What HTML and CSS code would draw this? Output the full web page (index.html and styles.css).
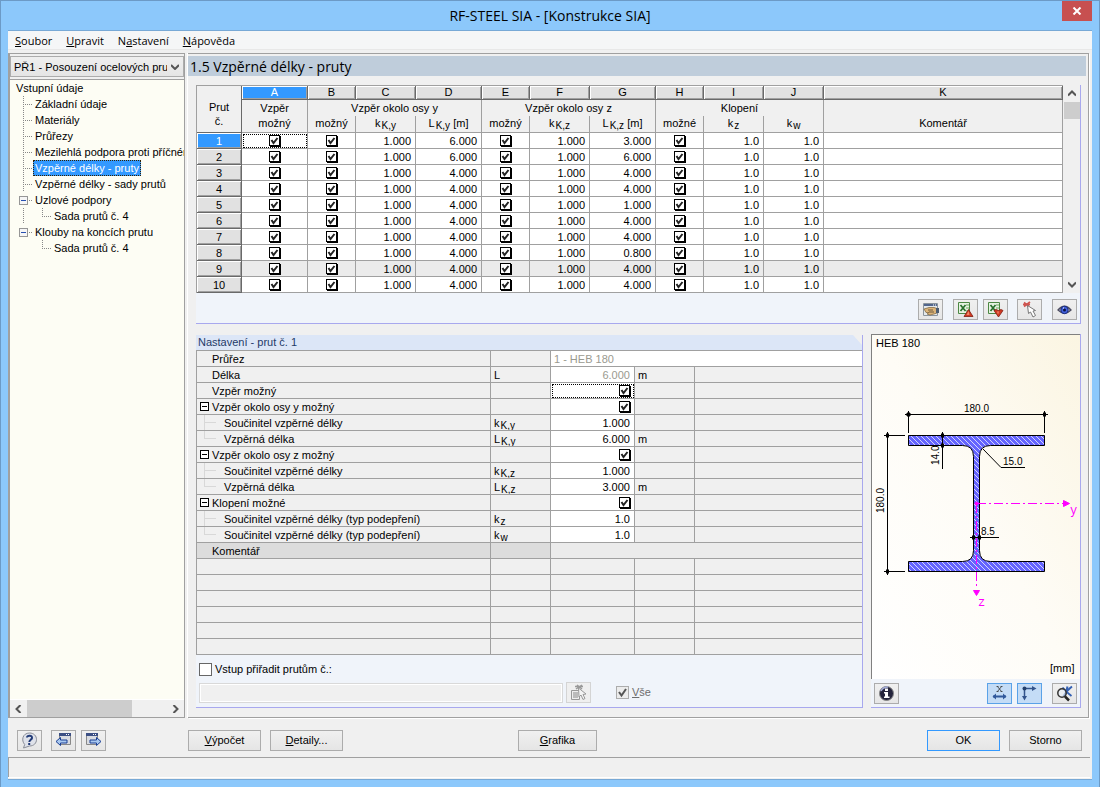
FILE: index.html
```html
<!DOCTYPE html>
<html lang="cs">
<head>
<meta charset="utf-8">
<title>RF-STEEL SIA - [Konstrukce SIA]</title>
<link rel="stylesheet" href="styles.css">
</head>
<body>
<div class="window">
  <header class="titlebar">
    <h1 class="title">RF-STEEL SIA - [Konstrukce SIA]</h1>
    <button class="close" aria-label="Zavřít"><svg width="10" height="8" viewBox="0 0 10 8"><path d="M1.500 .5l7 7M8.500 .5l-7 7" stroke="#fff" stroke-width="2" fill="none"/></svg></button>
  </header>
  <div class="client">
    <nav class="menu">
      <a href="#"><u>S</u>oubor</a><a href="#"><u>U</u>pravit</a><a href="#">N<u>a</u>stavení</a><a href="#"><u>N</u>ápověda</a>
    </nav>
    <div class="main">
      <aside class="side">
        <select class="case" aria-label="Případ"><option>PŘ1 - Posouzení ocelových pru</option></select>
        <div class="tree">
          <div class="node root">Vstupní údaje</div>
          <div class="node"><i class="tee"></i><a href="#">Základní údaje</a></div>
          <div class="node"><i class="tee"></i><a href="#">Materiály</a></div>
          <div class="node"><i class="tee"></i><a href="#">Průřezy</a></div>
          <div class="node"><i class="tee"></i><a href="#">Mezilehlá podpora proti příčném</a></div>
          <div class="node"><i class="tee"></i><a href="#" class="selected">Vzpěrné délky - pruty</a></div>
          <div class="node"><i class="tee"></i><a href="#">Vzpěrné délky - sady prutů</a></div>
          <div class="node open"><button class="fold" aria-label="Sbalit"></button><i class="dash"></i><a href="#">Uzlové podpory</a></div>
          <div class="node"><i class="bar"></i><i class="elbow"></i><a href="#">Sada prutů č. 4</a></div>
          <div class="node open"><button class="fold" aria-label="Sbalit"></button><i class="dash"></i><a href="#">Klouby na koncích prutu</a></div>
          <div class="node"><i class="bar none"></i><i class="elbow"></i><a href="#">Sada prutů č. 4</a></div>
        </div>
        <div class="hscroll">
          <button aria-label="Vlevo"><svg width="7" height="8" viewBox="0 0 7 8"><path d="M5.500 0L1.500 4l4 4" class="chev"/></svg></button>
          <span class="track"><span class="thumb"></span></span>
          <button aria-label="Vpravo"><svg width="7" height="8" viewBox="0 0 7 8"><path d="M1.500 0l4 4-4 4" class="chev"/></svg></button>
        </div>
      </aside>
      <main class="page">
        <h2 class="heading">1.5 Vzpěrné délky - pruty</h2>
        <div class="content">
          <section class="panel">
            <div class="gridwrap">
              <table class="grid">
                <colgroup><col class="c45"><col class="c66"><col class="c48"><col class="c60"><col class="c66"><col class="c48"><col class="c60"><col class="c66"><col class="c48"><col class="c60"><col class="c60"><col></colgroup>
                <thead>
                  <tr class="letters"><th rowspan="3" class="corner">Prut<br>č.</th><th class="active">A</th><th>B</th><th>C</th><th>D</th><th>E</th><th>F</th><th>G</th><th>H</th><th>I</th><th>J</th><th>K</th></tr>
                  <tr class="groups"><th>Vzpěr</th><th colspan="3">Vzpěr okolo osy y</th><th colspan="3">Vzpěr okolo osy z</th><th colspan="3">Klopení</th><th></th></tr>
                  <tr class="names"><th>možný</th><th>možný</th><th>k<sub>K,y</sub></th><th>L<sub>K,y</sub> [m]</th><th>možný</th><th>k<sub>K,z</sub></th><th>L<sub>K,z</sub> [m]</th><th>možné</th><th>k<sub>z</sub></th><th>k<sub>w</sub></th><th>Komentář</th></tr>
                </thead>
                <tbody>
                  <tr><th class="active">1</th><td class="focus"><input type="checkbox" aria-label="Vzpěr možný" checked></td><td><input type="checkbox" aria-label="Vzpěr y" checked></td><td>1.000</td><td>6.000</td><td><input type="checkbox" aria-label="Vzpěr z" checked></td><td>1.000</td><td>3.000</td><td><input type="checkbox" aria-label="Klopení" checked></td><td>1.0</td><td>1.0</td><td></td></tr>
                  <tr><th>2</th><td><input type="checkbox" aria-label="Vzpěr možný" checked></td><td><input type="checkbox" aria-label="Vzpěr y" checked></td><td>1.000</td><td>6.000</td><td><input type="checkbox" aria-label="Vzpěr z" checked></td><td>1.000</td><td>6.000</td><td><input type="checkbox" aria-label="Klopení" checked></td><td>1.0</td><td>1.0</td><td></td></tr>
                  <tr><th>3</th><td><input type="checkbox" aria-label="Vzpěr možný" checked></td><td><input type="checkbox" aria-label="Vzpěr y" checked></td><td>1.000</td><td>4.000</td><td><input type="checkbox" aria-label="Vzpěr z" checked></td><td>1.000</td><td>4.000</td><td><input type="checkbox" aria-label="Klopení" checked></td><td>1.0</td><td>1.0</td><td></td></tr>
                  <tr><th>4</th><td><input type="checkbox" aria-label="Vzpěr možný" checked></td><td><input type="checkbox" aria-label="Vzpěr y" checked></td><td>1.000</td><td>4.000</td><td><input type="checkbox" aria-label="Vzpěr z" checked></td><td>1.000</td><td>4.000</td><td><input type="checkbox" aria-label="Klopení" checked></td><td>1.0</td><td>1.0</td><td></td></tr>
                  <tr><th>5</th><td><input type="checkbox" aria-label="Vzpěr možný" checked></td><td><input type="checkbox" aria-label="Vzpěr y" checked></td><td>1.000</td><td>4.000</td><td><input type="checkbox" aria-label="Vzpěr z" checked></td><td>1.000</td><td>1.000</td><td><input type="checkbox" aria-label="Klopení" checked></td><td>1.0</td><td>1.0</td><td></td></tr>
                  <tr><th>6</th><td><input type="checkbox" aria-label="Vzpěr možný" checked></td><td><input type="checkbox" aria-label="Vzpěr y" checked></td><td>1.000</td><td>4.000</td><td><input type="checkbox" aria-label="Vzpěr z" checked></td><td>1.000</td><td>4.000</td><td><input type="checkbox" aria-label="Klopení" checked></td><td>1.0</td><td>1.0</td><td></td></tr>
                  <tr><th>7</th><td><input type="checkbox" aria-label="Vzpěr možný" checked></td><td><input type="checkbox" aria-label="Vzpěr y" checked></td><td>1.000</td><td>4.000</td><td><input type="checkbox" aria-label="Vzpěr z" checked></td><td>1.000</td><td>4.000</td><td><input type="checkbox" aria-label="Klopení" checked></td><td>1.0</td><td>1.0</td><td></td></tr>
                  <tr><th>8</th><td><input type="checkbox" aria-label="Vzpěr možný" checked></td><td><input type="checkbox" aria-label="Vzpěr y" checked></td><td>1.000</td><td>4.000</td><td><input type="checkbox" aria-label="Vzpěr z" checked></td><td>1.000</td><td>0.800</td><td><input type="checkbox" aria-label="Klopení" checked></td><td>1.0</td><td>1.0</td><td></td></tr>
                  <tr class="shade"><th>9</th><td><input type="checkbox" aria-label="Vzpěr možný" checked></td><td><input type="checkbox" aria-label="Vzpěr y" checked></td><td>1.000</td><td>4.000</td><td><input type="checkbox" aria-label="Vzpěr z" checked></td><td>1.000</td><td>4.000</td><td><input type="checkbox" aria-label="Klopení" checked></td><td>1.0</td><td>1.0</td><td></td></tr>
                  <tr><th>10</th><td><input type="checkbox" aria-label="Vzpěr možný" checked></td><td><input type="checkbox" aria-label="Vzpěr y" checked></td><td>1.000</td><td>4.000</td><td><input type="checkbox" aria-label="Vzpěr z" checked></td><td>1.000</td><td>4.000</td><td><input type="checkbox" aria-label="Klopení" checked></td><td>1.0</td><td>1.0</td><td></td></tr>
                </tbody>
              </table>
              <div class="vscroll">
                <button aria-label="Nahoru"><svg width="8" height="7" viewBox="0 0 8 7"><path d="M0 5.500l4-4 4 4" class="chev"/></svg></button>
                <span class="track"><span class="thumb"></span></span>
                <button aria-label="Dolů"><svg width="8" height="7" viewBox="0 0 8 7"><path d="M0 1.500l4 4 4-4" class="chev"/></svg></button>
              </div>
            </div>
            <div class="tools">
              <button class="tool" aria-label="Vlastnosti"><svg width="18" height="16" viewBox="0 0 18 16"><path d="M1.500 1.500h14v12h-14z" fill="#e4e9ec" stroke="#8b949c"/><path d="M2 2h13v2H2z" fill="#52668c"/><path d="M11 3h1m1 0h1" stroke="#fff"/><path d="M2 7l5-1.500h5l3 1v4.500l-3 1-4 1-3-1 2-1.500-3 0z" fill="#dcb478" stroke="#7a6038" stroke-width=".7"/><path d="M6 8h5M7 10h5" stroke="#54452e" stroke-width=".8"/><path d="M14 6h3v5h-3z" fill="#4c5c70"/></svg></button>
              <button class="tool gap" aria-label="Export do Excelu"><svg width="17" height="17" viewBox="0 0 17 17"><path d="M1.500 1.500h11v11h-11z" fill="#e6f2e2" stroke="#4c8844"/><path d="M9 4h3M9 7h3M9 10h3" stroke="#6aa85e"/><path d="M3.500 4l5 6M8.500 4l-5 6" stroke="#28702c" stroke-width="1.700"/><path d="M11.500 8.500l4.500 7H7z" fill="#d23a22" stroke="#7e1c10" stroke-width=".8"/><path d="M11.500 10l1 4h-3z" fill="#f08c6c"/></svg></button>
              <button class="tool near" aria-label="Import z Excelu"><svg width="17" height="17" viewBox="0 0 17 17"><path d="M1.500 1.500h11v11h-11z" fill="#e6f2e2" stroke="#4c8844"/><path d="M9 4h3M9 7h3M9 10h3" stroke="#6aa85e"/><path d="M3.500 4l5 6M8.500 4l-5 6" stroke="#28702c" stroke-width="1.700"/><path d="M7 9.500l2-1 2.500 1 2.500-1 2 1-4.500 6.500z" fill="#d23a22" stroke="#7e1c10" stroke-width=".8"/><path d="M10 10.500h2l-1 3z" fill="#f08c6c"/></svg></button>
              <button class="tool mid" aria-label="Vybrat pruty"><svg width="16" height="17" viewBox="0 0 16 17"><path d="M2 1.500l5 4M8 1L2 5.500M1 3.500h7" stroke="#cf5550" stroke-width="1.700"/><path d="M5.500 4.500l1 8 2-1.500 2.500 5 2.500-1.500-2.500-4.500 2.500-.5z" fill="#fff" stroke="#777"/></svg></button>
              <button class="tool gap" aria-label="Zobrazit"><svg width="15" height="12" viewBox="0 0 15 12"><path d="M1 6Q7.500-1.500 14 6Q7.500 12.500 1 6z" fill="#c8d0e4" stroke="#4c4c60" stroke-width="1.300"/><circle cx="7.500" cy="6" r="3.700" fill="#4463e0" stroke="#182a7c"/><circle cx="7.500" cy="6" r="1.500" fill="#0a1240"/><path d="M6 4h1" stroke="#fff"/></svg></button>
            </div>
          </section>
          <div class="lower">
            <section class="panel settings">
              <h3 class="caption"><span>Nastavení - prut č. 1</span><svg width="9" height="10" viewBox="0 0 9 10"><path d="M0 0h9v10z" fill="#f0f0f0"/></svg></h3>
              <table class="detail">
                <colgroup><col><col class="c60"><col class="c84"><col class="c60"><col class="c167"></colgroup>
                <tbody>
                  <tr><th><div class="name">Průřez</div></th><td></td><td colspan="3" class="val left off">1 - HEB 180</td></tr>
                  <tr><th><div class="name">Délka</div></th><td>L</td><td class="val off">6.000</td><td>m</td><td></td></tr>
                  <tr><th><div class="name">Vzpěr možný</div></th><td></td><td class="val focus"><input type="checkbox" aria-label="Vzpěr možný" checked></td><td></td><td></td></tr>
                  <tr><th><div class="name top"><button class="box" aria-label="Sbalit"></button>Vzpěr okolo osy y možný</div></th><td></td><td class="val"><input type="checkbox" aria-label="Vzpěr okolo osy y možný" checked></td><td></td><td></td></tr>
                  <tr><th><div class="name sub"><i class="tee"></i>Součinitel vzpěrné délky</div></th><td>k<sub>K,y</sub></td><td class="val">1.000</td><td></td><td></td></tr>
                  <tr><th><div class="name sub"><i class="elbow"></i>Vzpěrná délka</div></th><td>L<sub>K,y</sub></td><td class="val">6.000</td><td>m</td><td></td></tr>
                  <tr><th><div class="name top"><button class="box" aria-label="Sbalit"></button>Vzpěr okolo osy z možný</div></th><td></td><td class="val"><input type="checkbox" aria-label="Vzpěr okolo osy z možný" checked></td><td></td><td></td></tr>
                  <tr><th><div class="name sub"><i class="tee"></i>Součinitel vzpěrné délky</div></th><td>k<sub>K,z</sub></td><td class="val">1.000</td><td></td><td></td></tr>
                  <tr><th><div class="name sub"><i class="elbow"></i>Vzpěrná délka</div></th><td>L<sub>K,z</sub></td><td class="val">3.000</td><td>m</td><td></td></tr>
                  <tr><th><div class="name top"><button class="box" aria-label="Sbalit"></button>Klopení možné</div></th><td></td><td class="val"><input type="checkbox" aria-label="Klopení možné" checked></td><td></td><td></td></tr>
                  <tr><th><div class="name sub"><i class="tee"></i>Součinitel vzpěrné délky (typ podepření)</div></th><td>k<sub>z</sub></td><td class="val">1.0</td><td></td><td></td></tr>
                  <tr><th><div class="name sub"><i class="elbow"></i>Součinitel vzpěrné délky (typ podepření)</div></th><td>k<sub>w</sub></td><td class="val">1.0</td><td></td><td></td></tr>
                  <tr class="note"><th><div class="name">Komentář</div></th><td></td><td colspan="3" class="remark"></td></tr>
                  <tr><th></th><td></td><td></td><td></td><td></td></tr>
                  <tr><th></th><td></td><td></td><td></td><td></td></tr>
                  <tr><th></th><td></td><td></td><td></td><td></td></tr>
                  <tr><th></th><td></td><td></td><td></td><td></td></tr>
                  <tr><th></th><td></td><td></td><td></td><td></td></tr>
                  <tr><th></th><td></td><td></td><td></td><td></td></tr>
                </tbody>
              </table>
              <div class="assign">
                <label class="tick"><input type="checkbox">Vstup přiřadit prutům č.:</label>
                <div class="assignrow">
                  <input type="text" class="field" aria-label="Čísla prutů" disabled>
                  <button class="tool disabled" aria-label="Vybrat" disabled><svg width="17" height="17" viewBox="0 0 17 17"><path d="M1.500 6.500h8v9h-8z" fill="#eee" stroke="#999"/><path d="M3 9h5M3 11h5M3 13h5" stroke="#888"/><path d="M5 2.500h8M7 1l5 4M12 1L6 5" stroke="#999" stroke-width="1.500"/><path d="M8.500 4l.5 9 2-2 2 4.500 2-1-2-4 3-.5z" fill="#f4f4f4" stroke="#999"/></svg></button>
                  <label class="tick all"><input type="checkbox" checked disabled><span><u>V</u>še</span></label>
                </div>
              </div>
            </section>
            <section class="panel preview">
              <svg class="drawing" viewBox="872 335 208 344" preserveAspectRatio="xMidYMid meet">
                <defs>
                  <pattern id="hatch" width="5" height="5" patternUnits="userSpaceOnUse"><path d="M0 0h5v5H0z" fill="#6464ff"/><path d="M-1-1l7 7M-1 4l2 2M4-1l2 2" stroke="#d4d4fa" stroke-width="1"/></pattern>
                </defs>
                <text x="876" y="347" class="t11">HEB 180</text>
                <path d="M908.500 435.500h136v10h-54q-11 0-11 11v94q0 11 11 11h54v10h-136v-10h54q11 0 11-11v-94q0-11-11-11h-54z" fill="url(#hatch)" stroke="#000"/>
                <g stroke="#000" fill="none">
                  <path d="M905 414.500h143M908.500 411v22M1044.500 411v22M887.500 432v143M884 435.500h21M884 571.500h21M942.500 432v37M983 449l18 18.500h24M970 537.500h29"/>
                  <path d="M908.500 412.500v4M906.500 414.500h4M1044.500 412.500v4M887.500 433.500v4M887.500 569.500v4M942.500 433.500v4M942.500 443.500v4M973.500 535.500v4M979.500 535.500v4" stroke-width="3"/>
                </g>
                <g class="t10">
                  <text x="964" y="412">180.0</text>
                  <text x="1003" y="465">15.0</text>
                  <text x="981" y="535">8.5</text>
                  <text transform="translate(939 465) rotate(-90)">14.0</text>
                  <text transform="translate(884 513) rotate(-90)">180.0</text>
                </g>
                <g stroke="#f0f" fill="#f0f">
                  <path d="M977 503.500h87M976.500 504v85" stroke-dasharray="9 3 2 3" fill="none"/>
                  <circle cx="976.500" cy="503.500" r="1.500"/>
                  <path d="M1063.500 500.500l6 3-6 3zM973.500 590.500h6l-3 5z"/>
                </g>
                <text x="1070" y="514" class="axis">y</text><text x="978" y="606" class="axis">z</text>
                <text x="1050" y="672" class="t11">[mm]</text>
              </svg>
              <div class="tools previewtools">
                <button class="tool first" aria-label="Informace"><svg width="17" height="17" viewBox="0 0 17 17"><circle cx="8.500" cy="8.500" r="7" fill="#24243c" stroke="#888" stroke-width="1"/><path d="M3 6Q5 2 10 2" stroke="#a4acd8" stroke-width="1.500" fill="none"/><path d="M7 3.500h3v2.500H7zM6 7h4v4.500h1.500V13H6v-1.500h1V8.500H6z" fill="#fff"/></svg></button>
                <button class="tool on push" aria-label="Kóty"><svg width="17" height="16" viewBox="0 0 17 16"><path d="M6.500 1.500l4 5M10.500 1.500l-4 5M5.500 1.500h2M9.500 1.500h2M5.500 6.500h2M9.500 6.500h2" stroke="#333" stroke-width=".8"/><path d="M2 11.500h13" stroke="#31599c" stroke-width="2"/><path d="M5 8.500v6L1.500 11.500zM12 8.500v6l3.500-3z" fill="#31599c"/></svg></button>
                <button class="tool on near" aria-label="Osy"><svg width="17" height="17" viewBox="0 0 17 17"><path d="M2.500 3.500H12M3.500 3v9" stroke="#33548c" stroke-width="1.500"/><circle cx="3.500" cy="3.500" r="2" fill="#24406c"/><path d="M11 1l4.500 2.500L11 6zM1 11h5l-2.500 4.500z" fill="#33548c"/></svg></button>
                <button class="tool gap" aria-label="Zobrazit vše"><svg width="17" height="17" viewBox="0 0 17 17"><path d="M6.500 2.500q3 4 9 8.500M16 1.500Q11 5 7.500 11.500M11.500 1.500l-1.500 6" stroke="#3461b4" stroke-width="2" fill="none"/><circle cx="6" cy="8" r="4.200" fill="#e8eef6" fill-opacity=".6" stroke="#333" stroke-width="1.500"/><path d="M9 11.500l4 4" stroke="#222" stroke-width="2.500"/></svg></button>
              </div>
            </section>
          </div>
        </div>
      </main>
    </div>
    <footer class="actions">
      <button class="tool" aria-label="Nápověda"><svg width="17" height="17" viewBox="0 0 17 17"><path d="M8.500 1C13 1 15.500 4 15.500 7.500S13 14 8.500 14L2.500 16l1.200-3.500C0 8.500 1.500 1 8.500 1z" fill="#dfe2ea" stroke="#8a8e98"/><path d="M6 5.500C6 3 11.500 3 11 6c-.3 1.800-2.500 2-2.700 4" stroke="#233c78" stroke-width="2" fill="none"/><path d="M7.200 11h2v2h-2z" fill="#233c78"/></svg></button>
      <button class="tool prev" aria-label="Předchozí"><svg width="17" height="17" viewBox="0 0 17 17"><path d="M4.500 1.500h11v11h-11z" fill="#d8dbe2" stroke="#888"/><path d="M4 1h12v3H4z" fill="#3c4f84"/><path d="M11 2.500h1m1 0h1" stroke="#fff"/><path d="M1 9.500l4.500-4v2.500H12v3H5.500v2.500z" fill="#a8c8f0" stroke="#1b3f94"/></svg></button>
      <button class="tool next" aria-label="Další"><svg width="17" height="17" viewBox="0 0 17 17"><path d="M1.500 1.500h11v11h-11z" fill="#d8dbe2" stroke="#888"/><path d="M1 1h12v3H1z" fill="#3c4f84"/><path d="M8 2.500h1m1 0h1" stroke="#fff"/><path d="M16 9.500l-4.500-4v2.500H5v3h6.500v2.500z" fill="#a8c8f0" stroke="#1b3f94"/></svg></button>
      <button class="btn calc"><span><u>V</u>ýpočet</span></button>
      <button class="btn details"><span><u>D</u>etaily...</span></button>
      <button class="btn graphics"><span><u>G</u>rafika</span></button>
      <button class="btn ok">OK</button>
      <button class="btn cancel">Storno</button>
    </footer>
    <div class="status"></div>
  </div>
</div>
</body>
</html>
```
FILE: styles.css
```css
* { box-sizing: border-box; }
body { margin: 0; font: 11px/15px "Liberation Sans", Arial, sans-serif; color: #000; }
button { font: inherit; color: inherit; margin: 0; padding: 0; border: 0; background: none; display: flex; align-items: center; justify-content: center; flex: none; }
a { color: inherit; text-decoration: none; }
h1, h2, h3 { margin: 0; font-weight: normal; }
svg { display: block; }
.chev { fill: none; stroke: #555; stroke-width: 2; }

.window { min-height: 100vh; display: flex; flex-direction: column; background: #8cc8fb; border: 1px solid #6c9ac6; padding: 0 7px 7px; }
.titlebar { height: 30px; display: grid; grid-template-columns: 30px 1fr 30px; border-bottom: 1px solid #78a9d6; }
.title { grid-column: 2; text-align: center; font: 14px/30px "Open Sans", "Noto Sans", sans-serif; }
.close { height: 20px; background: #c75050; }
.client { flex: 1; display: flex; flex-direction: column; background: #f0f0f0; border-bottom: 1px solid #78a9d6; }

.menu { height: 19px; background: #f5f6f7; border-bottom: 1px solid #e8e8e8; display: flex; gap: 14px; padding-left: 7px; font: 11px/20px "Open Sans", "Noto Sans", sans-serif; }
.main { flex: 1; display: flex; gap: 3px; margin-top: 3px; padding-right: 3px; }

.side { width: 177px; flex: none; display: flex; flex-direction: column; border: 1px solid #a0a0a0; border-left-width: 2px; background: #f0f0f0; }
.case { appearance: none; height: 21px; margin: 2px 0; padding: 0 16px 0 3px; border: 1px solid #acacac; border-radius: 0; color: #000; font: 11px "Liberation Sans", Arial, sans-serif; overflow: hidden; background: url("data:image/svg+xml,%3Csvg xmlns='http://www.w3.org/2000/svg' width='8' height='6'%3E%3Cpath d='M0 1l4 4 4-4' fill='none' stroke='%23555' stroke-width='2'/%3E%3C/svg%3E") no-repeat right 4px center, linear-gradient(#efefef, #e5e5e5); }
.tree { flex: 1; border-top: 1px solid #a0a0a0; background: #fdfdf4; overflow: hidden; }
.node { height: 16px; display: flex; align-items: center; padding-left: 13px; line-height: 14px; white-space: nowrap; }
.node.root { padding-left: 6px; }
.node a { padding: 0 1px; border: 1px solid transparent; }
.node a.selected { background: #3399ff; color: #fff; border: 1px dotted #332200; }
.node i { flex: none; height: 16px; }
.tree .tee { width: 10px; background: repeating-linear-gradient(#888 0 1px, transparent 1px 2px) left / 1px 16px no-repeat, repeating-linear-gradient(90deg, #888 0 1px, transparent 1px 2px) 0 8px / 9px 1px no-repeat; }
.tree .bar { width: 19px; background: repeating-linear-gradient(#888 0 1px, transparent 1px 2px) left / 1px 16px no-repeat; }
.tree .bar.none { background: none; }
.tree .elbow { width: 10px; background: repeating-linear-gradient(#888 0 1px, transparent 1px 2px) left top / 1px 8px no-repeat, repeating-linear-gradient(90deg, #888 0 1px, transparent 1px 2px) 0 8px / 9px 1px no-repeat; }
.node.open { padding-left: 9px; }
.tree .dash { width: 5px; background: repeating-linear-gradient(90deg, #888 0 1px, transparent 1px 2px) 1px 8px / 3px 1px no-repeat; }
.fold { width: 9px; height: 9px; border: 1px solid #969696; background: linear-gradient(#2850b0, #2850b0) center / 5px 1px no-repeat #f6f6f6; }
.hscroll { height: 18px; display: flex; background: #f0f0f0; border-top: 1px solid #fff; }
.hscroll button { width: 17px; }
.hscroll .track { flex: 1; display: flex; }
.hscroll .thumb { width: 75%; background: #cdcdcd; }

.page { flex: 1; min-width: 0; border: solid #a0a0a0; border-width: 1px 1px 1px 0; box-shadow: -1px 0 0 #fff, 1px 1px 0 #fff; padding: 2px 2px 9px 0; display: flex; flex-direction: column; }
.heading { height: 20px; background: #bfcddb; padding-left: 2px; font: 14px/22px "Open Sans", "Noto Sans", sans-serif; }
.content { flex: 1; padding: 9px 5px 0 8px; display: flex; flex-direction: column; gap: 11px; }
.panel { border: solid #a8a8ee; border-width: 0 1px 1px 0; background: #f0f4fa; }
.gridwrap { display: flex; background: #f0f0f0; }
table { border-collapse: separate; border-spacing: 0; table-layout: fixed; }
th, td { font-weight: normal; padding: 0; overflow: hidden; white-space: nowrap; line-height: 14px; }
.c45 { width: 45px; } .c48 { width: 48px; } .c60 { width: 60px; } .c66 { width: 66px; } .c84 { width: 84px; } .c167 { width: 167px; }
sub { font-size: 10px; line-height: 1px; vertical-align: -2px; margin-left: 1px; }

.grid { flex: 1; width: 0; min-width: 0; border: solid #a0a0a0; border-width: 1px 0 0 1px; }
.grid th, .grid td { border: solid #a0a0a0; border-width: 0 1px 1px 0; text-align: center; }
.grid td { height: 16px; background: #fff; padding-right: 4px; text-align: right; }
.grid .shade td { background: #ebebeb; }
.grid td:has(input) { text-align: center; padding: 0; }
.grid .letters th { height: 14px; line-height: 13px; background: #e1e1e1; border-color: #696969; box-shadow: inset 1px 1px 0 #fff, inset -1px -1px 0 #a0a0a0; }
.grid .letters th.corner { background: #f0f0f0; border-color: #696969; box-shadow: none; line-height: 14px; padding-top: 9px; }
.grid .groups th { height: 16px; border-bottom: 0; line-height: 14px; padding-bottom: 1px; }
.grid .names th { height: 17px; padding-bottom: 2px; }
.grid tbody th { background: #e1e1e1; border-color: #696969; box-shadow: inset 1px 1px 0 #fff, inset -1px -1px 0 #a0a0a0; }
.grid .letters th.active, .grid tbody th.active { background: #3399ff; color: #fff; }
.focus { outline: 1px dotted #000; outline-offset: -2px; }
td input[type=checkbox] { appearance: none; display: inline-block; width: 11px; height: 11px; margin: 1px 0 0; vertical-align: top; border: 1px solid #000; box-shadow: 1px 1px 0 #000; background: url("data:image/svg+xml,%3Csvg xmlns='http://www.w3.org/2000/svg' width='9' height='9'%3E%3Cpath d='M1.500 4l2 3L7.500 2' fill='none' stroke='%23222' stroke-width='2'/%3E%3C/svg%3E") #fff; }

.vscroll { width: 17px; display: flex; flex-direction: column; }
.vscroll button { height: 17px; width: 17px; }
.vscroll .track { flex: 1; display: flex; flex-direction: column; padding-left: 1px; }
.vscroll .thumb { height: 17px; background: #cdcdcd; }
.tools { display: flex; align-items: center; justify-content: flex-end; height: 30px; padding: 3px 3px 0 0; }
.tool { width: 25px; height: 21px; border: 1px solid #acacac; background: linear-gradient(#f0f0f0, #e6e6e6); }
.tool.gap { margin-left: 10px; }
.tool.mid { margin-left: 9px; }
.tool.near { margin-left: 5px; }
.tool.on { background: #c4dcf6; border-color: #5aa2e8; }
.tool.disabled { border-color: #d4d4d4; background: #efefef; }

.lower { flex: 1; display: grid; grid-template-columns: minmax(0, 1fr) 210px; gap: 8px; }
.settings { display: flex; flex-direction: column; }
.caption { height: 15px; display: flex; justify-content: space-between; background: #dce6f7; color: #1f3a68; padding-left: 2px; font: 11px/15px "Liberation Sans", Arial, sans-serif; }
.detail { width: 100%; border: solid #a0a0a0; border-width: 1px 0 0 1px; background: #f0f0f0; }
.detail th, .detail td { height: 16px; border: solid #a0a0a0; border-width: 0 1px 1px 0; text-align: left; line-height: 14px; }
.detail td { padding-left: 3px; }
.detail tr > :last-child { border-right: 0; }
.detail .val { background: #fff; text-align: right; padding-right: 4px; }
.detail .left { text-align: left; }
.detail .off { color: #9a9a90; }
.detail .note > * { background: #dcdcdc; }
.detail .note .remark { background: #ebebeb; }
.name { display: flex; align-items: center; height: 15px; padding-left: 15px; }
.name.top { padding-left: 3px; gap: 3px; }
.name.sub { padding-left: 7px; gap: 8px; }
.name i { width: 12px; height: 15px; }
.name .tee { background: linear-gradient(#d8d8d8, #d8d8d8) left / 1px 15px no-repeat, linear-gradient(#d8d8d8, #d8d8d8) 0 7px / 12px 1px no-repeat; }
.name .elbow { background: linear-gradient(#d8d8d8, #d8d8d8) left top / 1px 7px no-repeat, linear-gradient(#d8d8d8, #d8d8d8) 0 7px / 12px 1px no-repeat; }
.box { width: 9px; height: 9px; border: 1px solid #000; background: linear-gradient(#000, #000) center / 5px 1px no-repeat #fff; }

.assign { flex: 1; display: flex; flex-direction: column; gap: 5px; padding: 7px 4px 4px 3px; }
.tick { display: flex; align-items: center; gap: 3px; }
.tick input { appearance: none; width: 13px; height: 13px; margin: 0; border: 1px solid #666; background: #fff; }
.assignrow { display: flex; align-items: center; gap: 3px; }
.field { flex: 1; min-width: 0; height: 20px; border: 1px solid #d9d9d9; padding: 0; background: #f0f0f0; box-shadow: inset 0 0 0 1px #fff; }
.all { width: 264px; padding-left: 22px; color: #6d6d6d; }
.tick input:checked { border-color: #acacac; background: url("data:image/svg+xml,%3Csvg xmlns='http://www.w3.org/2000/svg' width='11' height='11'%3E%3Cpath d='M2 5l2.500 3.500L9 2' fill='none' stroke='%23555' stroke-width='2'/%3E%3C/svg%3E") #ececec; }

.preview { display: flex; flex-direction: column; margin-top: -1px; }
.drawing { flex: 1; width: 100%; min-height: 345px; border: solid #808080; border-width: 1px 0 0 1px; background: linear-gradient(60deg, #fff, #fefcf6 50%, #fbf5e2); }
.previewtools { height: 28px; padding: 0 3px; }
.push { margin-left: auto; }
.t11 { font: 11px "Liberation Sans", Arial, sans-serif; }
.t10 { font: 10px "Liberation Sans", Arial, sans-serif; }
.axis { font: 12px "Liberation Mono", monospace; fill: #f0f; }

.actions { height: 39px; display: flex; align-items: center; padding: 5px 10px 0 9px; }
.prev { margin-left: 9px; }
.next { margin-left: 5px; }
.btn { width: 73px; height: 21px; border: 1px solid #acacac; background: linear-gradient(#f0f0f0, #e5e5e5); }
.calc { margin-left: 82px; }
.details { margin-left: 9px; }
.graphics { width: 79px; margin-left: 175px; }
.ok { margin-left: auto; border-color: #3399ff; }
.cancel { margin-left: 9px; }
.status { height: 20px; margin: 0 2px 2px 0; border: 1px solid #a0a0a0; border-width: 1px 0 0 1px; box-shadow: 0 1px 0 #fff; }
```
